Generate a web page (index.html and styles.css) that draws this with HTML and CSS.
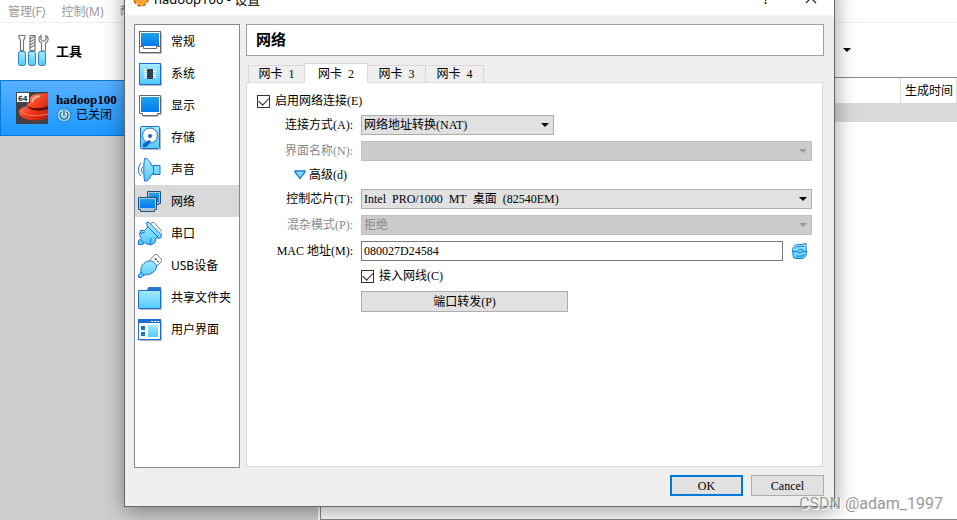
FILE: index.html
```
<!DOCTYPE html>
<html lang="zh-CN">
<head>
    <meta charset="utf-8">
    <title>hadoop100 - 设置</title>
    <link rel="stylesheet" href="styles.css">
</head>
<body>
    <!-- shared gradients for the icons -->
    <svg class="defs" width="0" height="0" aria-hidden="true">
        <defs>
            <linearGradient id="screen" x1="0" y1="0" x2="0" y2="1">
                <stop offset="0" stop-color="#1ea4e6"/>
                <stop offset="1" stop-color="#0579f2"/>
            </linearGradient>
            <linearGradient id="aqua" x1="0" y1="0" x2="0" y2="1">
                <stop offset="0" stop-color="#a6ecff"/>
                <stop offset="1" stop-color="#52c8fc"/>
            </linearGradient>
            <linearGradient id="hat" x1="0" y1="0" x2="1" y2="1">
                <stop offset="0" stop-color="#ffb090"/>
                <stop offset="0.5" stop-color="#f4401e"/>
                <stop offset="1" stop-color="#b81408"/>
            </linearGradient>
        </defs>
    </svg>

    <div class="manager">
        <nav class="menubar">
            <a href="#">管理(F)</a>
            <a href="#">控制(M)</a>
            <a href="#">帮助(H)</a>
        </nav>
        <div class="workspace">
            <aside class="machines">
                <div class="tools">
                    <svg width="32" height="34" viewBox="0 0 32 34">
                        <g fill="#fff" stroke="#777" stroke-width="1.2">
                            <path d="M2 1.500h6v2l-1.500 3v10h-3v-10l-1.500-3z"/>
                            <path d="M13 1.500h5v15h-5z"/>
                            <path d="M24 1.500c-3 2-3 6 .5 7.500v8h4v-8c3.500-1.500 3.500-5.500.5-7.500v4l-1.500 1.500h-2l-1.500-1.500z"/>
                            <path d="M13 5l5-3M13 8l5-3M13 11l5-3M13 14l5-3"/>
                        </g>
                        <g fill="url(#aqua)" stroke="#2a7fc4">
                            <rect x="1.500" y="17.500" width="7" height="14" rx="2"/>
                            <rect x="11.500" y="17.500" width="7" height="14" rx="2"/>
                            <rect x="21.500" y="17.500" width="7" height="14" rx="2"/>
                        </g>
                    </svg>
                    <strong>工具</strong>
                </div>
                <div class="machine">
                    <svg width="32" height="32" viewBox="0 0 32 32">
                        <rect width="32" height="32" fill="#423f46"/>
                        <path d="M3 20c0-3 4-5 8-6C12 6 16 2 21 2l11-1v25c-5 2-12 3-18 2C8 27 3 24 3 20z" fill="url(#hat)"/>
                        <path d="M11 14c5 3 14 3 21 0v3c-9 3-18 2-21-3z" fill="#5a0d08"/>
                        <path d="M5 19c5 5 16 6 27 3" fill="none" stroke="#ff7a52"/>
                        <path d="M16 10c1-4 3-5 8-6" fill="none" stroke="#ffb59a" stroke-width="2"/>
                        <rect x=".5" y=".5" width="13" height="10" fill="#fff" stroke="#444"/>
                        <text x="2" y="9" font-family="DejaVu Sans" font-weight="bold" font-size="7" fill="#333">64</text>
                    </svg>
                    <div class="machine-info">
                        <strong>hadoop100</strong>
                        <span>
                            <svg width="16" height="16" viewBox="0 0 16 16">
                                <circle cx="8" cy="8" r="7" fill="#62c4f8" stroke="#3180bd"/>
                                <path d="M5.500 5a4 4 0 1 0 5 0M8 3v5" fill="none" stroke="#fff" stroke-width="3"/>
                                <path d="M5.500 5a4 4 0 1 0 5 0M8 3v5" fill="none" stroke="#175a8c" stroke-width="1.400"/>
                            </svg>
                            已关闭
                        </span>
                    </div>
                </div>
            </aside>
            <section class="details">
                <div class="toolbar"><i class="arrow"></i></div>
                <div class="snapshots">
                    <div class="snapshots-head"><span>生成时间</span></div>
                    <div class="snapshots-row"></div>
                </div>
            </section>
        </div>
    </div>

    <div class="dialog" role="dialog" aria-label="hadoop100 - 设置">
        <header class="titlebar">
            <svg width="16" height="16" viewBox="0 0 16 16">
                <circle cx="8" cy="8" r="6" fill="#ffa126" stroke="#c75a0c" stroke-width="3.500" stroke-dasharray="3.200 1.500"/>
                <circle cx="8" cy="8" r="6.300" fill="#ffa62e"/>
                <circle cx="8" cy="8" r="2" fill="#fff" stroke="#e07a18"/>
            </svg>
            <span class="caption">hadoop100 - 设置</span>
            <button type="button" aria-label="帮助">?</button>
            <button type="button" aria-label="关闭">
                <svg width="12" height="12" viewBox="0 0 12 12"><path d="M1 1l10 10M11 1L1 11" stroke="#222" stroke-width="1.200"/></svg>
            </button>
        </header>
        <div class="content">
            <nav class="categories">
                <a href="#">
                    <svg width="24" height="24" viewBox="0 0 24 24">
                        <path d="M2 23.500h21.500V3" fill="none" stroke="#bbb"/>
                        <rect x="1.500" y="1.500" width="21" height="21" fill="#fff" stroke="#666"/>
                        <rect x="3" y="3" width="18" height="13" fill="url(#screen)"/>
                        <path d="M1.500 16.500h4v2h13v-2h4" fill="none" stroke="#666"/>
                    </svg>
                    常规
                </a>
                <a href="#">
                    <svg width="24" height="24" viewBox="0 0 24 24">
                        <path d="M2 23.500h21.500V3" fill="none" stroke="#bbb"/>
                        <rect x="1.500" y="1.500" width="21" height="21" fill="url(#aqua)" stroke="#1c6fd0"/>
                        <path d="M6 7.500h12M6 9.500h12M6 11.500h12M6 13.500h12M6 15.500h12" stroke="#fff"/>
                        <rect x="9" y="7" width="6" height="10" fill="#3a3d4a"/>
                    </svg>
                    系统
                </a>
                <a href="#">
                    <svg width="24" height="24" viewBox="0 0 24 24">
                        <path d="M5 22.500h15v-2h3.500V3" fill="none" stroke="#bbb"/>
                        <path d="M1.500 1.500h21v18h-3v2h-15v-2h-3z" fill="#fff" stroke="#666"/>
                        <rect x="3" y="3" width="18" height="15" fill="url(#screen)"/>
                    </svg>
                    显示
                </a>
                <a href="#">
                    <svg width="24" height="24" viewBox="0 0 24 24">
                        <path d="M4 23.500h18.500V3" fill="none" stroke="#bbb"/>
                        <rect x="2.500" y=".5" width="19" height="22" rx="1" fill="url(#aqua)" stroke="#1c6fd0"/>
                        <circle cx="12" cy="9.500" r="7.500" fill="#fff" stroke="#1c6fd0"/>
                        <circle cx="12" cy="10" r="2" fill="#1262c4"/>
                        <path d="M5 18l3-2 3-2 2 1-2 3-3 3H5z" fill="#1262c4"/>
                    </svg>
                    存储
                </a>
                <a href="#">
                    <svg width="24" height="24" viewBox="0 0 24 24">
                        <path d="M3 5c-3.500 3.500-3.500 10 0 13M5 8.500c-2 2-2 5 0 7" fill="none" stroke="#1c6fd0"/>
                        <path d="M6.500.5h2c2 1 4 4 5 6.500l1.500 1.500V7.500h7v9h-7v-1l-1.500 1c-1 3-3 6-5 6.500h-2c-1-6-1-16 0-22.500z" fill="url(#aqua)" stroke="#1c6fd0"/>
                        <path d="M15.500 8v8" stroke="#1c6fd0"/>
                    </svg>
                    声音
                </a>
                <a href="#" class="current">
                    <svg width="24" height="24" viewBox="0 0 24 24">
                        <path d="M9.500 1.500h13v12h-2v1h-11z" fill="#aac5dc" stroke="#24517a"/>
                        <rect x="11" y="3" width="10" height="9" fill="url(#screen)"/>
                        <path d="M.5 7.500h18v12h-2v2h-14v-2h-2z" fill="#aac5dc" stroke="#24517a"/>
                        <rect x="2" y="9" width="15" height="9" fill="url(#screen)"/>
                    </svg>
                    网络
                </a>
                <a href="#">
                    <svg width="24" height="24" viewBox="0 0 24 24">
                        <path d="M11 3l3-2.500h2l8 9v3l-3 3z" fill="#fff" stroke="#777"/>
                        <path d="M8.500.5h2.500l12 12v3l-2 1-3-1-1 5-4 2.500-4-1-2-1.500-3 2H.5v-4l3-2-2-4 1-4h4l3-3z" fill="url(#aqua)" stroke="#1c6fd0"/>
                        <path d="M9 4l11 11M1 12l6-2M12 22l1-6M3 18l3 3" fill="none" stroke="#1c6fd0"/>
                    </svg>
                    串口
                </a>
                <a href="#">
                    <svg width="24" height="24" viewBox="0 0 24 24">
                        <path d="M11 7l6-6.500h2l4.500 5v2L18 13z" fill="#fff" stroke="#777"/>
                        <path d="M17 4.500l1.500 1.500M19.500 7l1 1" stroke="#333" stroke-width="1.500"/>
                        <path d="M11 7c3-1 8 3 7.500 6-1 5-6 8-12.500 8l-3 2.500H.5v-2.500L3 18c-1-6 3-10 8-11z" fill="url(#aqua)" stroke="#1c6fd0"/>
                        <path d="M3 18l3 3" stroke="#1c6fd0"/>
                    </svg>
                    USB设备
                </a>
                <a href="#">
                    <svg width="24" height="24" viewBox="0 0 24 24">
                        <path d="M2 23.500h21.500V3" fill="none" stroke="#bbb"/>
                        <path d="M8 5l3-4h12v4z" fill="#2f74cf"/>
                        <path d="M.5 4.500h22v18H.5z" fill="url(#aqua)" stroke="#1c6fd0"/>
                        <path d="M9 4l2-3h12v3z" fill="#2f74cf"/>
                    </svg>
                    共享文件夹
                </a>
                <a href="#">
                    <svg width="24" height="24" viewBox="0 0 24 24">
                        <path d="M2 22.500h21.500V3" fill="none" stroke="#bbb"/>
                        <rect x=".5" y="1.500" width="22" height="20" fill="#fff" stroke="#1c6fd0"/>
                        <path d="M1 3.500h21" stroke="#1c6fd0" stroke-width="3"/>
                        <path d="M13 3.500h8" stroke="#fff" stroke-dasharray="2 1"/>
                        <path d="M3 8h4v4H3zM3 14h4v4H3z" fill="#1c6fd0"/>
                        <rect x="10" y="7" width="10" height="12" fill="url(#aqua)"/>
                    </svg>
                    用户界面
                </a>
            </nav>
            <form class="page" onsubmit="return false;">
                <h1>网络</h1>
                <div class="tabs" role="tablist">
                    <button type="button" role="tab">网卡&nbsp; 1</button>
                    <button type="button" role="tab" class="active" aria-selected="true">网卡&nbsp; 2</button>
                    <button type="button" role="tab">网卡&nbsp; 3</button>
                    <button type="button" role="tab">网卡&nbsp; 4</button>
                </div>
                <div class="panel">
                    <label class="check">
                        <input type="checkbox" checked>启用网络连接(E)
                    </label>
                    <div class="fields">
                        <label for="attach">连接方式(A):</label>
                        <div class="combo short">
                            <select id="attach"><option>网络地址转换(NAT)</option></select>
                        </div>

                        <label for="iface" class="off">界面名称(N):</label>
                        <div class="combo off">
                            <select id="iface" disabled><option></option></select>
                        </div>

                        <button type="button" class="advanced">
                            <svg width="12" height="10" viewBox="0 0 12 10"><path d="M1 1h10v1L6 8.500 1 2z" fill="#80e0ff" stroke="#1878e0" stroke-width="1.300"/></svg>
                            高级(d)
                        </button>

                        <label for="chip">控制芯片(T):</label>
                        <div class="combo">
                            <select id="chip"><option>Intel&nbsp; PRO/1000&nbsp; MT&nbsp; 桌面&nbsp; (82540EM)</option></select>
                        </div>

                        <label for="promisc" class="off">混杂模式(P):</label>
                        <div class="combo off">
                            <select id="promisc" disabled><option>拒绝</option></select>
                        </div>

                        <label for="mac">MAC 地址(M):</label>
                        <div class="mac">
                            <input type="text" id="mac" value="080027D24584">
                            <button type="button" aria-label="刷新">
                                <svg width="16" height="16" viewBox="0 0 16 16">
                                    <path d="M.5 8C.5 3 4 .5 9 1.500l5-1v5c1.500 5 0 9-4 10H4l-2.500-1z" fill="url(#aqua)" stroke="#1878d8"/>
                                    <path d="M1 8.500h4L8 6l3 1-1 2-2 1-2-1M11 8.500h4M3 5.500C5 3 8 3 12 3.500M12.500 11.500c-2 2-5 2-8 1.500" fill="none" stroke="#1878d8"/>
                                </svg>
                            </button>
                        </div>

                        <label class="check cable">
                            <input type="checkbox" checked>接入网线(C)
                        </label>
                        <button type="button" class="push forward">端口转发(P)</button>
                    </div>
                </div>
            </form>
        </div>
        <footer class="buttons">
            <button type="button" class="push default">OK</button>
            <button type="button" class="push">Cancel</button>
        </footer>
    </div>

    <div class="watermark">CSDN @adam_1997</div>
</body>
</html>
```
FILE: styles.css
```
* {
    box-sizing: border-box;
}

body {
    margin: 0;
    position: relative;
    overflow: hidden;
    font-family: "Noto Sans", "Noto Sans CJK SC", sans-serif;
    font-size: 12px;
    line-height: 16px;
    color: #000;
    background-color: #fff;
}

a {
    color: inherit;
    text-decoration: none;
}

button,
input,
select {
    font: inherit;
    color: inherit;
    margin: 0;
}

button {
    padding: 0;
    border: none;
    background: none;
}

svg {
    flex: none;
}

.defs {
    position: absolute;
}

/* manager window behind */

.manager {
    display: flex;
    flex-direction: column;
    height: 100vh;
}

.menubar {
    display: flex;
    gap: 16px;
    height: 23px;
    padding: 4px 8px;
    color: #999;
    border-bottom: 1px solid #eee;
}

.workspace {
    display: flex;
    flex: 1;
}

.machines {
    width: 318px;
    background-color: #cecece;
}

.tools {
    display: flex;
    align-items: center;
    gap: 7px;
    height: 57px;
    padding: 0 0 2px 17px;
    background-color: #fff;
}

.tools strong {
    font-size: 13px;
}

.machine {
    display: flex;
    align-items: center;
    gap: 8px;
    height: 56px;
    padding-left: 15px;
    border: 1px solid #0a78d8;
    background-image: linear-gradient(#58b0ff, #1a98ff);
}

.machine-info strong {
    display: block;
    font-family: "Liberation Serif", serif;
    font-size: 13px;
    line-height: 14px;
}

.machine-info span {
    display: flex;
    align-items: center;
    gap: 4px;
    line-height: 14px;
}

.details {
    display: flex;
    flex-direction: column;
    flex: 1;
    padding-left: 2px;
}

.toolbar {
    display: flex;
    align-items: center;
    justify-content: flex-end;
    height: 54px;
    padding-right: 106px;
}

.arrow,
.combo::after {
    content: "";
    border: 4px solid transparent;
    border-top-color: #000;
    border-bottom: none;
}

.snapshots {
    flex: 1;
    border: 1px solid #828790;
    border-right: none;
}

.snapshots-head {
    display: flex;
    justify-content: flex-end;
    height: 25px;
}

.snapshots-head span {
    padding: 5px 3px 4px 4px;
    border-left: 1px solid #ddd;
    border-right: 1px solid #ddd;
}

.snapshots-row {
    height: 19px;
    background-color: #d9d9d9;
}

/* settings dialog, its top is scrolled off screen */

.dialog {
    position: absolute;
    top: -16px;
    left: 124px;
    right: 122px;
    border: 1px solid #666;
    background-color: #efefef;
    box-shadow: 0 4px 20px rgba(0, 0, 0, 0.4);
}

.titlebar {
    display: flex;
    align-items: center;
    gap: 5px;
    height: 30px;
    padding: 0 16px 2px 8px;
    background-color: #fff;
}

.caption {
    flex: 1;
    font-size: 13px;
}

.titlebar button {
    width: 14px;
    height: 16px;
    font-size: 14px;
}

.titlebar button + button {
    margin-left: 26px;
}

.content {
    display: flex;
    gap: 6px;
    padding: 9px 10px 0 9px;
}

.categories {
    width: 106px;
    height: 444px;
    border: 1px solid #828790;
    background-color: #fff;
}

.categories a {
    display: flex;
    align-items: center;
    gap: 9px;
    height: 32px;
    padding: 1px 0 0 3px;
    white-space: nowrap;
}

.categories .current {
    background-color: #d9d9d9;
}

/* network page */

.page {
    display: flex;
    flex-direction: column;
    flex: 1;
    font-family: "Liberation Serif", "Noto Sans CJK SC", serif;
}

.page h1 {
    height: 32px;
    margin: 0 0 7px;
    padding: 0 9px;
    border: 1px solid #a0a0a0;
    font-size: 15px;
    line-height: 30px;
    background-color: #fff;
}

.tabs {
    display: flex;
    align-items: flex-end;
    height: 19px;
    padding-left: 2px;
}

.tabs button {
    width: 59px;
    height: 17px;
    margin-right: -1px;
    border: 1px solid #d9d9d9;
    border-bottom: none;
}

.tabs button:first-child {
    width: 57px;
}

/* covers the top border of the panel */
.tabs .active {
    position: relative;
    z-index: 1;
    width: 64px;
    height: 20px;
    margin-bottom: -1px;
    background-color: #fff;
}

.panel {
    flex: 1;
    margin: 0 1px 1px 0;
    padding: 9px 10px;
    border: 1px solid #d9d9d9;
    background-color: #fff;
}

.check {
    display: flex;
    align-items: center;
    gap: 5px;
    height: 18px;
}

.check input {
    appearance: none;
    display: grid;
    place-items: center;
    width: 13px;
    height: 13px;
    border: 1px solid #333;
}

.check input:checked::before {
    content: "";
    width: 9px;
    height: 5px;
    margin-bottom: 3px;
    border-left: 1px solid #222;
    border-bottom: 1px solid #222;
    transform: rotate(-45deg);
}

.fields {
    display: grid;
    grid-template-columns: 96px 1fr;
    gap: 6px 8px;
    align-items: center;
    padding-top: 5px;
}

.fields > label {
    text-align: right;
}

.off {
    color: #888;
}

.combo {
    display: flex;
    align-items: center;
}

.combo::after {
    margin: 0 5px 0 -13px;
    pointer-events: none;
}

.combo.off::after {
    border-top-color: #999;
}

.combo select {
    appearance: none;
    flex: 1;
    height: 20px;
    padding: 0 2px;
    border: 1px solid #adadad;
    border-radius: 0;
    background-color: #e1e1e1;
}

.combo select:disabled {
    border-color: #bfbfbf;
    color: #888;
    background-color: #ccc;
    opacity: 1;
}

.short {
    width: 193px;
}

.advanced {
    grid-column: 1 / -1;
    display: flex;
    align-items: center;
    gap: 3px;
    height: 16px;
    padding-left: 37px;
}

.mac {
    display: flex;
    align-items: center;
    gap: 9px;
    padding-right: 4px;
}

.mac input {
    flex: 1;
    height: 20px;
    padding: 0 2px;
    border: 1px solid #7a7a7a;
}

.mac button {
    display: flex;
}

.cable,
.forward {
    grid-column: 2;
}

.push {
    height: 21px;
    border: 1px solid #adadad;
    background-color: #e1e1e1;
}

.forward {
    width: 207px;
}

.buttons {
    display: flex;
    justify-content: flex-end;
    gap: 8px;
    padding: 7px 10px 10px;
    font-family: "Liberation Serif", serif;
}

.buttons .push {
    width: 73px;
}

.buttons .default {
    border: 2px solid #0078d7;
}

.watermark {
    position: absolute;
    right: 14px;
    top: 495px;
    font-family: Roboto, sans-serif;
    font-size: 16px;
    line-height: 18px;
    color: #999;
    text-shadow: 1px 1px 0 #fff;
}
```
